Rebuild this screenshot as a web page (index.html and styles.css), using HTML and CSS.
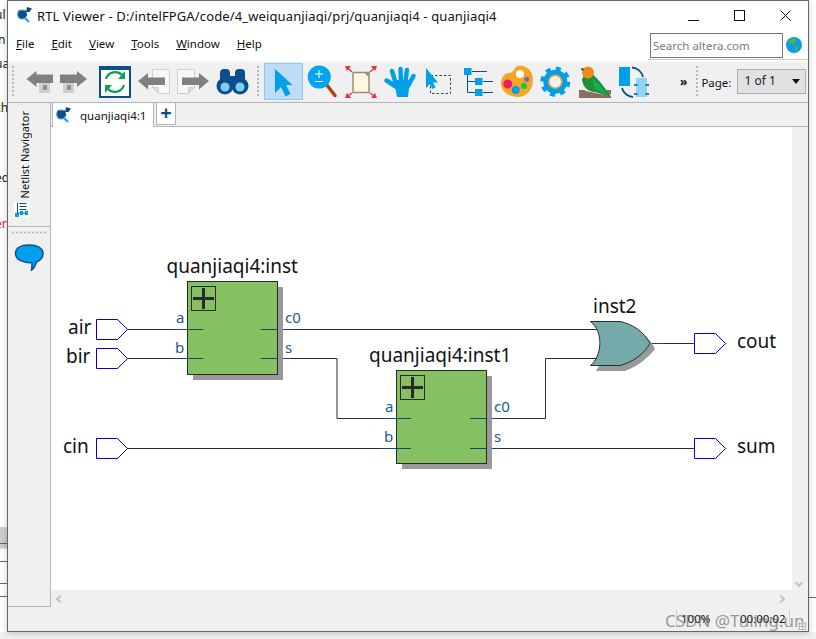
FILE: index.html
```html
<!DOCTYPE html>
<html lang="en">
<head>
<meta charset="utf-8">
<title>RTL Viewer</title>
<link rel="stylesheet" href="styles.css">
</head>
<body>
<svg class="defs" width="0" height="0">
  <symbol id="rtl-logo" viewBox="0 0 16 16">
    <path d="M11 0l5 1.500-2.500 3.500H10z" fill="#0b4f8a"/>
    <circle cx="6" cy="7.500" r="5.200" fill="#6fc4ee"/>
    <path d="M2.500 3.500h7.500l1 5-3 3h-4l-2-3z" fill="#0b4f8a"/>
    <path d="M9 11l4 4" stroke="#2aa6e6" stroke-width="2.400"/>
  </symbol>
</svg>
<div class="desktop">
  <span class="peek peek-a">ul</span>
  <span class="peek peek-b">in</span>
  <span class="peek peek-c">ua</span>
  <span class="peek peek-d">ch</span>
  <span class="peek peek-e">ed</span>
  <span class="peek peek-f">er</span>
  <div class="peek-band"></div>
  <div class="peek-line peek-l1"></div>
  <div class="peek-line peek-l2"></div>
  <div class="peek-line peek-l3"></div>
  <div class="peek-line peek-l4"></div>
  <div class="peek-line peek-l5"></div>

  <div class="window">
    <header class="titlebar">
      <svg class="title-logo"><use href="#rtl-logo"/></svg>
      <span class="title-text">RTL Viewer - D:/intelFPGA/code/4_weiquanjiaqi/prj/quanjiaqi4 - quanjiaqi4</span>
      <div class="win-controls">
        <svg class="win-btn" viewBox="0 0 45 20"><path d="M17 15.500h11" stroke="#111" fill="none"/></svg>
        <svg class="win-btn" viewBox="0 0 45 20"><rect x="17.500" y="5.500" width="10" height="10" stroke="#111" fill="none"/></svg>
        <svg class="win-btn" viewBox="0 0 45 20"><path d="M17.500 5.500l10 10M27.500 5.500l-10 10" stroke="#111" fill="none"/></svg>
      </div>
    </header>

    <nav class="menubar">
      <ul class="menu">
        <li><u>F</u>ile</li>
        <li><u>E</u>dit</li>
        <li><u>V</u>iew</li>
        <li><u>T</u>ools</li>
        <li><u>W</u>indow</li>
        <li><u>H</u>elp</li>
      </ul>
      <div class="search-area">
        <input class="search" type="text" placeholder="Search altera.com">
        <svg class="globe" viewBox="0 0 16 16">
          <circle cx="8" cy="8" r="8" fill="#0f9be8"/>
          <path d="M3 3.500l4-2 4 1.200-1 2.500-2 .5-.6 2.300L5.600 7 3.400 5.600zM9 9l3 .5-.6 3-1.600 2L9 12z" fill="#4fb833"/>
        </svg>
      </div>
    </nav>

    <div class="toolbar">
      <div class="grip grip-first"></div>
      <button class="tool">
        <svg viewBox="21 63 39 37">
          <path d="M26.500 79l10-8v3.500H53V83H36.500v4z" fill="#808080"/>
          <rect x="39" y="83" width="11" height="10" fill="#cfcfcf"/>
          <rect x="43" y="85" width="4" height="5" fill="#8f8f8f"/>
        </svg>
      </button>
      <button class="tool tool-narrow">
        <svg viewBox="60 63 36 37">
          <path d="M87 79l-10-8v3.500H60V83h17v4z" fill="#808080"/>
          <rect x="63" y="83" width="11" height="10" fill="#cfcfcf"/>
          <rect x="67" y="85" width="4" height="5" fill="#8f8f8f"/>
        </svg>
      </button>
      <button class="tool">
        <svg viewBox="96 63 39 37">
          <rect x="100" y="67" width="30" height="30" fill="#fff" stroke="#0b4f8a" stroke-width="2"/>
          <rect x="100" y="66" width="30" height="4" fill="#0b4f8a"/>
          <path d="M106 79a9.500 9.500 0 0 1 16-4M124 85a9.500 9.500 0 0 1-16 4" fill="none" stroke="#0ba24e" stroke-width="2.200"/>
          <path d="M125 71v8h-7zM105 93v-8h7z" fill="#0ba24e"/>
        </svg>
      </button>
      <button class="tool">
        <svg viewBox="135 63 39 37">
          <path d="M152.500 69.500h17v24h-11l-6-6z" fill="#f8f8f8" stroke="#cfcfcf"/>
          <path d="M152.500 87.500h6v6z" fill="#ddd" stroke="#cfcfcf"/>
          <path d="M138 81l10-8v4.500h17v7.500h-17v4.500z" fill="#808080"/>
        </svg>
      </button>
      <button class="tool">
        <svg viewBox="174 63 39 37">
          <path d="M177.500 69.500h17v18l-6 6h-11z" fill="#f8f8f8" stroke="#cfcfcf"/>
          <path d="M194.500 87.500h-6v6z" fill="#ddd" stroke="#cfcfcf"/>
          <path d="M209 81l-10-8v4.500h-17v7.500h17v4.500z" fill="#808080"/>
        </svg>
      </button>
      <button class="tool">
        <svg viewBox="213 63 39 37">
          <rect x="220" y="69" width="10" height="14" rx="4" fill="#0b4f8a"/>
          <rect x="235" y="69" width="10" height="14" rx="4" fill="#0b4f8a"/>
          <rect x="229" y="76" width="7" height="11" fill="#0b4f8a"/>
          <circle cx="225" cy="86" r="8.500" fill="#0b4f8a"/>
          <circle cx="240" cy="86" r="8.500" fill="#0b4f8a"/>
          <circle cx="225" cy="87" r="4.500" fill="#7fcdf0"/>
          <circle cx="240" cy="87" r="4.500" fill="#7fcdf0"/>
        </svg>
      </button>
      <div class="grip grip-second"></div>
      <button class="tool tool-active">
        <svg viewBox="264 63 39 37">
          <path d="M275 69v24l6-6 4.500 9.500 5-2.500-4.500-9h6.500z" fill="#00a0e8"/>
        </svg>
      </button>
      <button class="tool">
        <svg viewBox="303 63 39 37">
          <path d="M326 84l9 11.500" stroke="#a8431a" stroke-width="3.500" fill="none" stroke-linecap="round"/>
          <circle cx="319.300" cy="77" r="11.500" fill="#00a4ef"/>
          <path d="M315 74h8M319 70v8M315 81.500h8" stroke="#fff" fill="none"/>
        </svg>
      </button>
      <button class="tool">
        <svg viewBox="342 63 39 37">
          <rect x="353" y="72.500" width="16" height="20" fill="#fdf6e0" stroke="#a08a80" stroke-width="1.500"/>
          <path d="M364 72.500h5v5z" fill="#a08a80"/>
          <path d="M352 72l-5-4.500M370 72l5-4.500M352 93l-5 3.500M370 93l5 3.500" stroke="#e8303a" stroke-width="1.300" fill="none"/>
          <path d="M345 66h6l-4 5zM377 66h-6l4 5zM345 98h6l-4-5zM377 98h-6l4-5z" fill="#e8303a"/>
        </svg>
      </button>
      <button class="tool">
        <svg viewBox="381 63 39 37">
          <path d="M394 80h16l-2 17h-11z" fill="#00a0e8"/>
          <path d="M398 88l-11.500-7.500M396 84l-4-13M401 84l-.5-15M405 84l2-14M408 86l5.500-10" stroke="#00a0e8" stroke-width="4.500" stroke-linecap="round" fill="none"/>
        </svg>
      </button>
      <button class="tool">
        <svg viewBox="420 63 39 37">
          <rect x="430.500" y="75.500" width="20" height="18" fill="none" stroke="#0b4f8a" stroke-dasharray="2.500 2"/>
          <path d="M426 68v20l4-4 2.500 5 3-1.500-2.500-5h5z" fill="#00a0e8"/>
        </svg>
      </button>
      <button class="tool">
        <svg viewBox="459 63 39 37">
          <path d="M472 71.500h15M467.500 75v17.500H475M467.500 81.500H475M483 81.500h10M483 92.500h10" stroke="#0b4f8a" fill="none"/>
          <rect x="464" y="68" width="7.500" height="7" fill="#00a0e8"/>
          <rect x="475" y="78" width="7.500" height="7" fill="#00a0e8"/>
          <rect x="475" y="89" width="7.500" height="7" fill="#00a0e8"/>
        </svg>
      </button>
      <button class="tool">
        <svg viewBox="498 63 39 37">
          <path d="M518 66c8-1 15 4 15 14 0 10-7 17-15 17-9 0-17-5-17-14 0-6 4-10 8-10 5 0 5-6 9-7z" fill="#f5a623"/>
          <circle cx="520" cy="74" r="4" fill="#fff"/>
          <circle cx="507.700" cy="84" r="4.500" fill="#e91e63"/>
          <circle cx="515.700" cy="90" r="4" fill="#00a0e8"/>
          <circle cx="524" cy="86" r="3" fill="#1ac24c"/>
          <circle cx="526.700" cy="79.300" r="2.500" fill="#7c5cd6"/>
        </svg>
      </button>
      <button class="tool">
        <svg viewBox="537 63 39 37">
          <circle cx="555.300" cy="81.700" r="12" fill="#00a0e8"/>
          <circle cx="555.300" cy="81.700" r="13" fill="none" stroke="#00a0e8" stroke-width="4" stroke-dasharray="5.100 5.110"/>
          <circle cx="555.300" cy="81.700" r="6.500" fill="#f0f0f0" stroke="#e0a83a" stroke-width="1.500"/>
        </svg>
      </button>
      <button class="tool">
        <svg viewBox="576 63 39 37">
          <rect x="579" y="90" width="32" height="8" fill="#8c6e60"/>
          <path d="M585 90l26 5.500" stroke="#eee" stroke-width="1.500"/>
          <path d="M582 80c1-5 6-8 10-6 6 4 13 14 19 23l-16-5c-7 0-12-5-13-12z" fill="#1f8f3a"/>
          <path d="M592 78l9 8 6 9-12-6z" fill="#13b04e"/>
          <circle cx="588" cy="72.500" r="6" fill="#f08a1c"/>
          <path d="M582.500 71l-2-3 4 1z" fill="#333"/>
        </svg>
      </button>
      <button class="tool">
        <svg viewBox="615 63 39 37">
          <rect x="619" y="67" width="11" height="19" fill="#00a0e8"/>
          <rect x="636" y="78" width="11" height="19" fill="#8fd3f4"/>
          <path d="M632 67.500a12 12 0 0 1 11 9.500M622 88a12 12 0 0 0 11 9" fill="none" stroke="#0b4f8a" stroke-width="1.800"/>
          <path d="M634 85h15M634 94h15" stroke="#0b4f8a" stroke-width="1.500" stroke-dasharray="3.500 8 3.500" fill="none"/>
        </svg>
      </button>
      <span class="overflow">&raquo;</span>
      <div class="grip grip-third"></div>
      <label class="page-label">Page:</label>
      <div class="combo"><span>1 of 1</span><i class="combo-arrow"></i></div>
    </div>

    <div class="workspace">
      <aside class="sidebar">
        <div class="side-tab">
          <span class="side-label">Netlist Navigator</span>
          <svg class="side-icon" viewBox="0 0 16 16">
            <rect width="16" height="16" fill="#fff"/>
            <path d="M5.500 1.500h7M5.500 4.500h7M5.500 7.500h7M3.500 1v10M3.500 11h9" stroke="#0b4f8a" fill="none"/>
            <rect x="1" y="11" width="4" height="4" fill="#00a0e8"/>
            <rect x="6" y="9" width="3" height="4" fill="#00a0e8"/>
            <rect x="11" y="9" width="3" height="4" fill="#00a0e8"/>
          </svg>
        </div>
        <div class="side-sep"></div>
        <svg class="bubble" viewBox="0 0 30 28">
          <path d="M15 1c8 0 14 3 14 8.500 0 4-3 7-6.500 8.500-1 3-3 7-5 8 .5-3 .5-5 .5-7-8 0-16.500-3-16.500-9.500C1.500 4 7 1 15 1z" fill="#009ff0" stroke="#0b4f8a" stroke-width="1.500"/>
        </svg>
      </aside>

      <main class="main">
        <div class="tabbar">
          <div class="tab">
            <svg class="tab-logo"><use href="#rtl-logo"/></svg>
            <span>quanjiaqi4:1</span>
          </div>
          <div class="tab-add">+</div>
        </div>
        <div class="view-row">
          <svg class="schematic" viewBox="51 127 741 463">
            <g class="wires">
              <path d="M127 329.500H203M127 358.500H203M261 329.500H596M261 358.500H337V418.500H411"/>
              <path d="M127 448.500H411M470 418.500H545.500V358.500H596M470 448.500H694M650 343.500H694"/>
            </g>
            <g class="stubs">
              <path d="M172 329.500H203M172 358.500H203M261 329.500H291M261 358.500H291"/>
              <path d="M381 418.500H411M381 448.500H411M470 418.500H500M470 448.500H500M596 329.500H620M596 358.500H620M650 343.500H664"/>
            </g>

            <rect class="shadow" x="193" y="287" width="90" height="93"/>
            <rect class="block" x="187.500" y="281.500" width="90" height="93"/>
            <path class="stubs" d="M187.500 329.500H203M187.500 358.500H203M261 329.500H277.500M261 358.500H277.500"/>
            <rect class="plus-box" x="191.500" y="286.500" width="24" height="24"/>
            <path class="plus" d="M193 298.500H214M203.500 288V309"/>

            <rect class="shadow" x="402" y="376" width="90" height="93"/>
            <rect class="block" x="396.500" y="370.500" width="90" height="93"/>
            <path class="stubs" d="M396.500 418.500H411M396.500 448.500H411M470 418.500H486.500M470 448.500H486.500"/>
            <rect class="plus-box" x="400.500" y="375.500" width="24" height="24"/>
            <path class="plus" d="M402 387.500H423M412.500 377V398"/>

            <path class="shadow" d="M596 327H625C640 330 650 338 655 349C648 358 638 366 625 371H596C604 360 604 338 596 327Z"/>
            <path class="gate" d="M590.500 321.500H620C633 324 644 332 650 343.500C644 354 633 362 620 365.500H590.500C602 356 604 332 590.500 321.500Z"/>

            <g class="port">
              <path d="M96.500 319.500H117.500L127.500 329.500L117.500 339.500H96.500Z"/>
              <path d="M96.500 348.500H117.500L127.500 358.500L117.500 368.500H96.500Z"/>
              <path d="M96.500 438.500H117.500L127.500 448.500L117.500 458.500H96.500Z"/>
              <path d="M694.500 333.500H715.500L725.500 343.500L715.500 353.500H694.500Z"/>
              <path d="M694.500 438.500H715.500L725.500 448.500L715.500 458.500H694.500Z"/>
            </g>

            <g class="label">
              <text x="166.500" y="273">quanjiaqi4:inst</text>
              <text x="369" y="362">quanjiaqi4:inst1</text>
              <text x="593" y="313">inst2</text>
              <text x="68" y="334">air</text>
              <text x="66" y="363">bir</text>
              <text x="63" y="453">cin</text>
              <text x="737" y="348">cout</text>
              <text x="737" y="453">sum</text>
            </g>
            <g class="pin">
              <text x="176" y="323">a</text>
              <text x="175" y="353">b</text>
              <text x="285" y="323">c0</text>
              <text x="285" y="353">s</text>
              <text x="385" y="412">a</text>
              <text x="384" y="442">b</text>
              <text x="494" y="412">c0</text>
              <text x="494" y="442">s</text>
            </g>
          </svg>
          <div class="vscroll"><i class="chev chev-down"></i></div>
        </div>
        <div class="hscroll">
          <i class="chev chev-left"></i>
          <i class="chev chev-right"></i>
        </div>
      </main>
    </div>

    <footer class="statusbar">
      <span class="zoom-value">100%</span>
      <span class="time-value">00:00:02</span>
      <span class="watermark">CSDN @Tuling.un</span>
      <i class="size-grip"></i>
    </footer>
  </div>
</div>
</body>
</html>
```

FILE: styles.css
```css
* { box-sizing: border-box; }
html, body { margin: 0; padding: 0; }
body { width: 816px; height: 639px; overflow: hidden; background: #fff; font-family: "Noto Sans", "Open Sans", sans-serif; color: #111; }
.defs { position: absolute; }

.desktop { position: relative; width: 816px; height: 639px; overflow: hidden; background: linear-gradient(#fff 0, #fff 632px, #f0f0f0 632px); }
.peek { position: absolute; left: 0; font-size: 12px; line-height: 14px; color: #222; width: 7px; overflow: hidden; }
.peek-a { top: 8px; left: -5px; width: 12px; }
.peek-b { top: 33px; left: -5px; width: 12px; }
.peek-c { top: 57px; left: -5px; width: 12px; }
.peek-d { top: 101px; left: -5px; width: 12px; }
.peek-e { top: 171px; left: -5px; width: 12px; }
.peek-f { top: 217px; left: -5px; width: 12px; color: #e8104a; }
.peek-band { position: absolute; left: 0; top: 527px; width: 7px; height: 22px; background: #ccc; border-bottom: 1px solid #e4e4e4; }
.peek-line { position: absolute; left: 0; width: 7px; height: 1px; background: #666; }
.peek-l1 { top: 543px; }
.peek-l2 { top: 561px; }
.peek-l3 { top: 583px; }
.peek-l4 { top: 596px; }
.peek-l5 { top: 597px; left: 809px; }

.window { position: absolute; left: 7px; top: 0; width: 802px; height: 632px; background: #fff; border: 1px solid #666; display: flex; flex-direction: column; box-shadow: 0 1px 6px rgba(0, 0, 0, .22); }

.titlebar { height: 29px; display: flex; align-items: center; padding-left: 8px; flex: none; }
.title-logo { width: 16px; height: 16px; margin-top: -1px; }
.title-text { margin-left: 5px; font-size: 13px; letter-spacing: .01em; white-space: nowrap; flex: 1; margin-top: 1px; }
.win-controls { display: flex; margin-top: -2px; }
.win-btn { width: 45px; height: 20px; display: block; }
.win-btn + .win-btn { margin-left: 1px; }

.menubar { height: 31px; display: flex; justify-content: space-between; flex: none; }
.menu { list-style: none; margin: 6px 0 0; padding: 0 0 0 8px; display: flex; font-size: 11.500px; line-height: 16px; gap: 17px; }
.search-area { width: 160px; height: 30px; padding: 3px 0 0 2px; border-bottom: 1px solid #ccc; display: flex; gap: 3px; }
.search { width: 133px; height: 25px; border: 1px solid #767676; outline: none; padding: 0 2px; font: 11.500px "Noto Sans", sans-serif; }
.search::placeholder { color: #7a7a7a; opacity: 1; }
.globe { width: 16px; height: 16px; margin-top: 4px; }

.toolbar { height: 42px; flex: none; background: #f0f0f0; display: flex; align-items: center; border-top: 1px solid #f8f8f8; border-bottom: 1px solid #b5b5b5; padding-bottom: 2px; }
.grip { flex: none; height: 32px; background: radial-gradient(circle, #b9b9b9 1px, transparent 1.200px) 0 0 / 4px 4px; }
.grip-first { width: 4px; margin: 0 6px 0 3px; }
.grip-second { width: 4px; margin: 0 4px 0 4px; }
.grip-third { width: 4px; margin: 0 2px 0 8px; }
.tool { flex: none; width: 39px; height: 37px; padding: 0; border: 1px solid transparent; background: transparent; display: block; position: relative; }
.tool svg { position: absolute; left: -1px; top: -1px; width: 39px; height: 37px; display: block; }
.tool-narrow { width: 36px; }
.tool-narrow svg { width: 36px; }
.tool-active { background: #bedcf5; border-color: #90c5f0; }
.overflow { margin-left: 26px; font-size: 12px; font-weight: 700; }
.page-label { font-size: 11.500px; margin-top: 2px; }
.combo { width: 69px; height: 25px; margin: 1px 0 0 6px; background: #e1e1e1; border: 1px solid #adadad; font-size: 12px; line-height: 22px; padding-left: 6px; color: #223; position: relative; }
.combo-arrow { position: absolute; right: 5px; top: 9px; border: 4px solid transparent; border-top: 5px solid #111; border-bottom: 0; }

.workspace { flex: 1; display: flex; min-height: 0; background: #f0f0f0; }
.sidebar { width: 43px; border-right: 1px solid #b5b5b5; border-bottom: 1px solid #b5b5b5; display: flex; flex-direction: column; align-items: center; flex: none; }
.side-tab { height: 124px; width: 100%; display: flex; flex-direction: column; align-items: center; border-bottom: 1px solid #b5b5b5; padding: 8px 8px 0 0; }
.side-label { writing-mode: vertical-rl; transform: rotate(180deg); font-size: 11px; line-height: 16px; white-space: nowrap; }
.side-icon { width: 16px; height: 16px; margin: 4px 6px 0 0; }
.side-sep { width: 36px; height: 3px; margin-top: 4px; background: radial-gradient(circle, #bbb 1px, transparent 1.200px) 0 0 / 4px 3px; }
.bubble { width: 30px; height: 28px; margin-top: 10px; }

.main { flex: 1; min-width: 0; display: flex; flex-direction: column; }
.tabbar { height: 24px; flex: none; display: flex; border-bottom: 1px solid #b5b5b5; padding-left: 1px; }
.tab { width: 102px; height: 24px; background: #fff; border: 1px solid #b5b5b5; border-bottom: 0; border-top: 0; display: flex; align-items: center; padding-left: 2px; font-size: 11.500px; }
.tab-logo { width: 16px; height: 16px; margin-right: 9px; }
.tab-add { width: 20px; height: 22px; margin-left: 2px; background: #fff; border: 1px solid #b5b5b5; border-top: 0; color: #0b4f8a; font-size: 20px; font-weight: 700; line-height: 19px; text-align: center; }
.view-row { flex: 1; display: flex; min-height: 0; }
.schematic { width: 741px; height: 463px; background: #fff; flex: none; display: block; }
.vscroll { flex: 1; position: relative; }
.hscroll { height: 16px; flex: none; position: relative; }
.chev { position: absolute; width: 6px; height: 6px; border: solid #c4c4c4; border-width: 0 2px 2px 0; }
.chev-down { left: 4px; bottom: 5px; transform: rotate(45deg); }
.chev-left { left: 6px; top: 5px; transform: rotate(135deg); }
.chev-right { left: 727px; top: 5px; transform: rotate(-45deg); }

.wires path { fill: none; stroke: #2a2a2a; stroke-width: 1; }
.stubs, .stubs path { fill: none; stroke: #0b4a72; stroke-width: 1; }
.shadow { fill: #999; }
.block { fill: #85c062; stroke: #2a2a2a; stroke-width: 1; }
.plus-box { fill: none; stroke: #2a2a2a; stroke-width: 1; }
.plus { fill: none; stroke: #2a2a2a; stroke-width: 3; }
.gate { fill: #75aaaa; stroke: #2a2a2a; stroke-width: 1; }
.port path { fill: #fff; stroke: #0000e6; stroke-width: 1; }
.label text { font-family: "Noto Sans", sans-serif; font-size: 19px; fill: #111; }
.pin text { font-family: "Noto Sans", sans-serif; font-size: 15px; fill: #1a5a8a; }

.statusbar { height: 24px; flex: none; background: #f0f0f0; position: relative; font-size: 11.500px; line-height: 24px; }
.statusbar::before, .statusbar::after { content: ""; position: absolute; top: 3px; bottom: 3px; width: 1px; background: #d0d0d0; }
.statusbar::before { left: 668px; }
.statusbar::after { left: 781px; }
.zoom-value { position: absolute; left: 673px; top: 0; }
.time-value { position: absolute; left: 732px; top: 0; }
.watermark { position: absolute; left: 657px; top: 2px; font-size: 17px; line-height: 24px; color: rgba(90, 90, 90, .6); white-space: nowrap; }
.size-grip { position: absolute; right: 2px; bottom: 1px; width: 8px; height: 8px; background: radial-gradient(circle, #bbb 1px, transparent 1.200px) 0 0 / 3px 3px; }
```
